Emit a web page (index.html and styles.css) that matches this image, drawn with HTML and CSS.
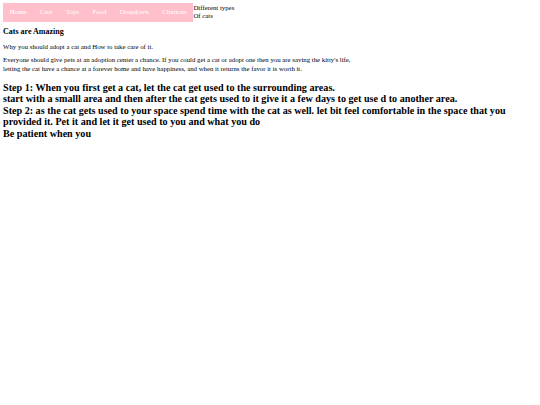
FILE: index.html
```html
<!DOCTYPE html>
<html>
<head>
<meta charset="utf-8">
<link rel="stylesheet" href="styles.css">
</head>
<body>
<div class="top">
  <nav class="nav">
    <a class="nav-item">Home</a>
    <a class="nav-item">Care</a>
    <a class="nav-item">Toys</a>
    <a class="nav-item">Food</a>
    <a class="nav-item">Dropdown</a>
    <a class="nav-item">Citations</a>
  </nav>
  <div class="types">Different types<br>Of cats</div>
</div>
<h4 class="title">Cats are Amazing</h4>
<p class="text intro">Why you should adopt a cat and How to take care of it.</p>
<p class="text body-text">Everyone should give pets at an adoption center a chance. If you could get a cat or adopt one then you are saving the kitty's life,<br>letting the cat have a chance at a forever home and have happiness, and when it returns the favor it is worth it.</p>
<h2 class="steps">Step 1: When you first get a cat, let the cat get used to the surrounding areas.<br>
start with a smalll area and then after the cat gets used to it give it a few days to get use d to another area.<br>
Step 2: as the cat gets used to your space spend time with the cat as well. let bit feel comfortable in the space that you provided it. Pet it and let it get used to you and what you do<br>
Be patient when you</h2>
</body>
</html>
```
FILE: styles.css
```css
body {
  margin: 3px;
  font-family: "Liberation Serif", "Times New Roman", serif;
  font-size: 6.8px;
  line-height: 8.3px;
  color: #000;
  background: #fff;
}
.top {
  display: flex;
  align-items: flex-start;
}
.nav {
  display: flex;
  background: #ffc0cb;
  height: 19px;
  align-items: center;
}
.nav-item {
  color: #fff;
  padding: 0 6.7px;
}
.types {
  line-height: 8px;
  padding-top: 1px;
}
.title {
  font-size: 8px;
  line-height: 9px;
  margin: 5px 0 0 0;
}
.text {
  margin: 0;
}
.intro {
  margin-top: 7px;
}
.body-text {
  margin-top: 5px;
}
.steps {
  font-size: 10.15px;
  line-height: 11.5px;
  margin: 9px 0 0 0;
}
```
